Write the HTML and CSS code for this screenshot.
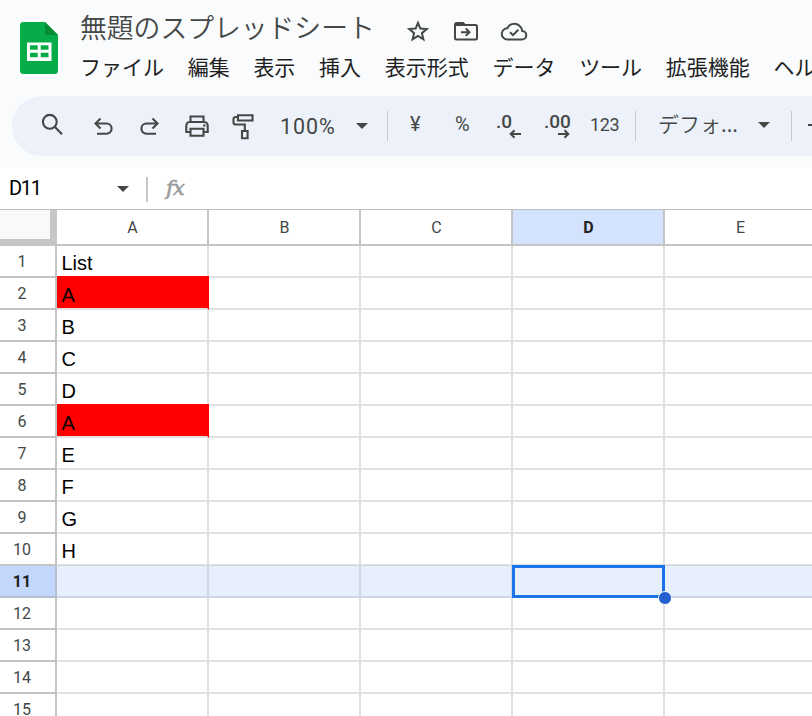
FILE: index.html
```
<!DOCTYPE html>
<html lang="ja">
<head>
<meta charset="utf-8">
<title>無題のスプレッドシート</title>
<link rel="stylesheet" href="styles.css">
</head>
<body>
<header class="top">
  <svg class="logo" width="38" height="52" viewBox="0 0 38 52"><path fill="#06ac47" d="M3.500 0H25L38 13v35.500a3.500 3.500 0 0 1-3.500 3.500h-31A3.500 3.500 0 0 1 0 48.500v-45A3.500 3.500 0 0 1 3.500 0z"/><path fill="#058a36" d="M25 0l13 13H25z"/><path fill="#fff" fill-rule="evenodd" d="M7 20.500h24.500v18.500H7zM10 23.300v4.500h7.700v-4.500zM20.700 23.300v4.500h7.800v-4.500zM10 30.800v4.500h7.700v-4.500zM20.700 30.800v4.500h7.800v-4.500z"/></svg>
  <div class="heading">
    <div class="title-row">
      <h1 class="title">無題のスプレッドシート</h1>
      <svg class="star" width="24" height="24" viewBox="0 0 24 24" fill="none" stroke="#444746" stroke-width="2"><path d="M12 3.800l2.400 5.800 6.300.5-4.800 4.100 1.500 6.100-5.400-3.300-5.400 3.300 1.500-6.100-4.800-4.100 6.300-.5z"/></svg>
      <svg class="folder" width="26" height="24" viewBox="0 0 26 24" fill="none" stroke="#444746" stroke-width="2"><path d="M2 6.500V19a1.500 1.500 0 0 0 1.500 1.500h19A1.500 1.500 0 0 0 24 19V7.500A1.500 1.500 0 0 0 22.500 6H12L10 4H3.500A1.500 1.500 0 0 0 2 5.500z"/><path fill="#444746" stroke="none" d="M2 4h8l2.500 3H2z"/><path d="M8 13.200h8M12.800 9.500l3.700 3.700-3.700 3.700"/></svg>
      <svg class="cloud" width="28" height="24" viewBox="0 0 28 24" fill="none" stroke="#444746" stroke-width="2"><path d="M7.500 20.500h14.300a4.300 4.300 0 0 0 .3-8.600C21.600 7.500 18.200 4.700 14.300 4.700c-3.200 0-5.700 1.700-6.900 4.500a5.650 5.650 0 0 0 .1 11.300z"/><path d="M10 13.200l3 3 5.300-5.400"/></svg>
    </div>
    <nav class="menu"><span>ファイル</span><span>編集</span><span>表示</span><span>挿入</span><span>表示形式</span><span>データ</span><span>ツール</span><span>拡張機能</span><span>ヘルプ</span></nav>
  </div>
</header>
<div class="toolbar">
  <svg class="tool search" viewBox="0 0 28 28"><circle cx="11.800" cy="9.800" r="6.900"/><path d="M16.700 14.700l7.300 7.500"/></svg>
  <svg class="tool undo" viewBox="0 0 28 28"><path d="M11.500 6.500l-5 5 5 5M6.500 11.500h11a5.100 5.100 0 0 1 0 10.200H8"/></svg>
  <svg class="tool redo" viewBox="0 0 28 28"><path d="M16.500 6.500l5 5-5 5M21.500 11.500h-11a5.100 5.100 0 0 0 0 10.200H20"/></svg>
  <svg class="tool print" viewBox="0 0 28 28"><path d="M7.500 10V4.500h13V10M7.500 20H3.300v-6.500a3.500 3.500 0 0 1 3.500-3.500h14.400a3.500 3.500 0 0 1 3.500 3.500V20h-4.200M7.500 16.800h13v7h-13z"/><circle class="dot" cx="21.300" cy="13.500" r="1.200"/></svg>
  <svg class="tool paint" viewBox="0 0 28 28"><path d="M9 3.200h14.500v5.300H9zM9 5H6.500a2 2 0 0 0-2 2v3.500a2 2 0 0 0 2 2h9.300V19M13 19h5.600v7.300H13z"/></svg>
  <span class="zoom">100%</span><i class="caret zoom-caret"></i><i class="bar"></i>
  <span class="yen">¥</span><span class="percent">%</span>
  <span class="decimal less">.0<svg width="13" height="10" viewBox="0 0 13 10"><path d="M12 5H2M5.500 1.200L1.700 5l3.800 3.800"/></svg></span>
  <span class="decimal more">.00<svg width="13" height="10" viewBox="0 0 13 10"><path d="M1 5h10M7.500 1.200L11.300 5 7.500 8.800"/></svg></span>
  <span class="formats">123</span><i class="bar format-bar"></i>
  <span class="font">デフォ...</span><i class="caret font-caret"></i><i class="bar size-bar"></i><i class="minus"></i>
</div>
<div class="formula"><span class="name">D11</span><i class="caret"></i><i class="bar"></i><span class="fx">fx</span></div>
<main class="sheet">
  <div class="row head"><div class="corner"></div><div>A</div><div>B</div><div>C</div><div class="active">D</div><div>E</div></div>
  <div class="row"><b>1</b><div>List</div><div></div><div></div><div></div><div></div></div>
  <div class="row"><b>2</b><div class="red">A</div><div></div><div></div><div></div><div></div></div>
  <div class="row"><b>3</b><div>B</div><div></div><div></div><div></div><div></div></div>
  <div class="row"><b>4</b><div>C</div><div></div><div></div><div></div><div></div></div>
  <div class="row"><b>5</b><div>D</div><div></div><div></div><div></div><div></div></div>
  <div class="row"><b>6</b><div class="red">A</div><div></div><div></div><div></div><div></div></div>
  <div class="row"><b>7</b><div>E</div><div></div><div></div><div></div><div></div></div>
  <div class="row"><b>8</b><div>F</div><div></div><div></div><div></div><div></div></div>
  <div class="row"><b>9</b><div>G</div><div></div><div></div><div></div><div></div></div>
  <div class="row"><b>10</b><div>H</div><div></div><div></div><div></div><div></div></div>
  <div class="row current"><b>11</b><div></div><div></div><div></div><div class="selected"><span class="outline"></span><span class="handle"></span></div><div></div></div>
  <div class="row"><b>12</b><div></div><div></div><div></div><div></div><div></div></div>
  <div class="row"><b>13</b><div></div><div></div><div></div><div></div><div></div></div>
  <div class="row"><b>14</b><div></div><div></div><div></div><div></div><div></div></div>
  <div class="row"><b>15</b><div></div><div></div><div></div><div></div><div></div></div>
</main>
</body>
</html>
```
FILE: styles.css
```
* { box-sizing: border-box; }
html { overflow: hidden; }
body {
  margin: 0;
  width: 812px;
  height: 716px;
  overflow: hidden;
  background: #f9fbfd;
  color: #444746;
  font-family: Roboto, "Noto Sans CJK JP", sans-serif;
}
svg { display: block; flex: none; }

.top { display: flex; height: 96px; padding-left: 20px; }
.logo { margin-top: 22px; }
.heading { margin-left: 22px; white-space: nowrap; }
.title-row { display: flex; height: 53px; padding-top: 7px; }
.title {
  margin: 0;
  width: 325.500px;
  font: 350 26.800px/40px "Noto Sans CJK JP", sans-serif;
}
.title-row svg { margin-top: 12px; }
.folder { margin-left: 23px; }
.cloud { margin-left: 21px; }
.menu {
  display: flex;
  gap: 23.700px;
  color: #1f1f1f;
  font: 21px/27px "Noto Sans CJK JP", sans-serif;
}

.toolbar {
  display: flex;
  align-items: center;
  width: 830px;
  height: 60px;
  margin-left: 12px;
  border-radius: 30px;
  background: #edf2fa;
  white-space: nowrap;
}
.toolbar > * { flex: none; }
.tool { width: 28px; height: 28px; fill: none; stroke: #444746; stroke-width: 2.100; }
.tool .dot { fill: #444746; stroke: none; }
.search { margin-left: 26px; }
.undo { margin-left: 23px; }
.redo, .print { margin-left: 19px; }
.paint { margin-left: 18px; }
.caret {
  border: solid transparent;
  border-width: 6px 6.500px 0;
  border-top-color: #444746;
}
.bar { width: 1px; height: 30px; background: #c7c7c7; }
.zoom { width: 76px; margin-left: 23px; font-size: 21.500px; letter-spacing: .9px; }
.zoom-caret { margin-right: 19px; }
.yen { width: 45px; margin: -4px 0 0 22px; font-size: 20px; }
.percent { width: 41px; margin-top: -4px; font-size: 20px; }
.decimal {
  display: flex;
  flex-direction: column;
  width: 26px;
  height: 28px;
  font: 500 19px/20px Roboto, sans-serif;
}
.decimal svg { align-self: flex-end; margin-top: -3px; fill: none; stroke: #444746; stroke-width: 2; }
.more { margin-left: 22px; }
.formats { width: 45px; margin: -3px 0 0 20px; font-size: 18px; letter-spacing: -.4px; }
.font { width: 100px; margin: -6px 0 0 22px; font: 350 21px/30px "Noto Sans CJK JP", sans-serif; }
.font-caret { margin-top: -3px; }
.size-bar { margin-left: 21px; }
.minus { width: 10px; height: 2px; margin: -2px 0 0 16px; background: #444746; }

.formula {
  display: flex;
  align-items: center;
  height: 42px;
  margin-top: 12px;
  padding-left: 9px;
  border-bottom: 1px solid #c0c0c0;
  background: #fff;
}
.name { width: 108px; margin-top: -2px; color: #000; font-size: 20px; letter-spacing: -1.300px; }
.formula .bar { width: 2px; height: 25px; margin: 2px 0 0 17px; }
.fx {
  margin-left: 18px;
  color: #999c9e;
  font: italic 21px/25px "DejaVu Serif", serif;
  letter-spacing: -.8px;
  -webkit-text-stroke: .6px #999c9e;
}

.sheet { background: #fff; }
.row { display: grid; grid-template-columns: 57px repeat(5, 152px); height: 32px; }
.row > div {
  padding: 4px 0 0 4.500px;
  border: solid #e1e1e1;
  border-width: 0 2px 2px 0;
  color: #000;
  font: 20px/26px "Liberation Sans", sans-serif;
}
.row > b {
  padding: 2px 11px 0 0;
  border: solid #c4c4c4;
  border-width: 0 2px 2px 0;
  text-align: center;
  font: 400 16px/28px Roboto, sans-serif;
}
.row > .red { background: #f00; border-right-color: #f00; box-shadow: 0 -2px #f00; }
.head { height: 36px; }
.head > div {
  padding: 1px 0 0 1px;
  border-color: #c4c6c5;
  color: #444746;
  font: 16px/33px Roboto, sans-serif;
  text-align: center;
}
.head > .active { background: #d3e3fd; color: #1f1f1f; font-weight: 700; }
.head > .corner { border-width: 0 7px 7px 0; border-color: #c4c7c5; background: #f8f9fa; }
.current > div { background: #e8effc; border-color: #d0d5e4; box-shadow: 0 -1px #d0d5e4; }
.current > b { background: #c2d7fb; border-color: #b5bfcd; color: #1f1f1f; font-weight: 700; }
.row > .selected { position: relative; z-index: 1; }
.outline { position: absolute; left: -1px; top: -1px; width: 153px; height: 33px; border: 3px solid #1a73e8; }
.handle { position: absolute; left: 145px; top: 25px; width: 14px; height: 14px; border: 1px solid #f4f7fc; border-radius: 50%; background: #235fce; }
```
